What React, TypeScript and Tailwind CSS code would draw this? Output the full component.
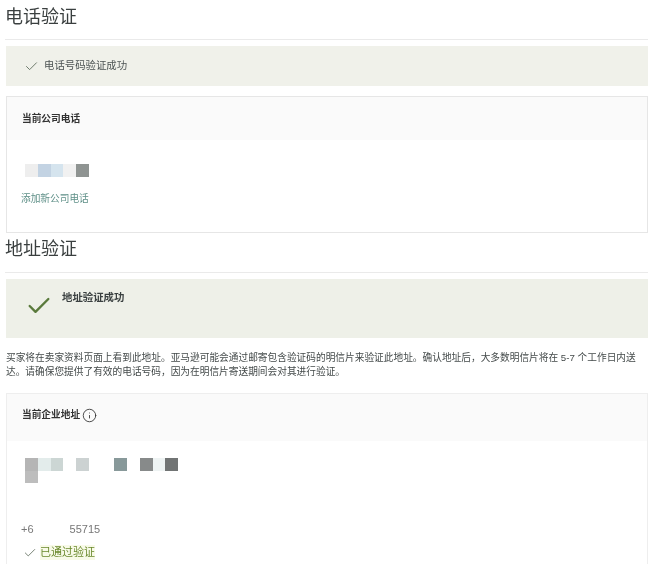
import React from 'react';
import { Check, Info } from 'lucide-react';

const phoneCells = ['#eeeeee', '#c3d3e3', '#d5e4ee', '#f1f1f1', '#8f9492'];
const addressCells = ['#b5b5b5', '#e3eceb', '#ccd6d4', 'transparent', '#ccd2d2', 'transparent', 'transparent', '#88999a', 'transparent', '#878a8a', '#eef3f3', '#717474'];

const Mosaic: React.FC<{ cells: string[] }> = ({ cells }) => (
  <div className="flex">
    {cells.map((color, i) => (
      <div key={i} className="w-[12.75px] h-[13px]" style={{ backgroundColor: color }} />
    ))}
  </div>
);

export default function App() {
  return (
    <div className="h-[564px] overflow-hidden bg-white pl-[6px] pr-[7px] font-['Liberation_Sans','Noto_Sans_CJK_SC',sans-serif] blur-[0.5px]">
      <div className="pt-[5px]">
        <div className="h-[35px] -ml-[1px] border-b border-[#eaeaea] text-[18px] leading-[24px] text-[#3a3f3f]">电话验证</div>
      </div>

      <div className="mt-[6px] h-[40px] flex items-center bg-[#f0f1ea] pl-[18px] gap-[5px]">
        <Check size={15} strokeWidth={1.4} className="text-[#5c6a5a]" />
        <span className="text-[10.4px] text-[#4d5454]">电话号码验证成功</span>
      </div>

      <div className="mt-[10px] h-[137px] border border-[#e6e6e6]">
        <div className="h-[43px] flex items-center bg-[#fafafa] pl-[15px] pt-[2px] text-[9.7px] font-bold text-[#333333]">当前公司电话</div>
        <div className="pl-[18px] pt-[24px]">
          <Mosaic cells={phoneCells} />
          <div className="mt-[15px] -ml-[4px] text-[9.7px] leading-[14px] text-[#5f9088]">添加新公司电话</div>
        </div>
      </div>

      <div className="mt-[4px]">
        <div className="h-[36px] -ml-[1px] border-b border-[#eaeaea] text-[18px] leading-[24px] text-[#3a3f3f]">地址验证</div>
      </div>

      <div className="mt-[6px] h-[59px] flex items-start bg-[#eef0e8] pl-[19px]">
        <Check size={28} strokeWidth={2} className="mt-[13px] text-[#5a7a3c]" />
        <span className="ml-[9px] mt-[12px] text-[10.4px] leading-[14px] font-bold text-[#3a4040]">地址验证成功</span>
      </div>

      <p className="mt-[13px] text-[9.7px] leading-[14px] text-[#444a4a]">
        买家将在卖家资料页面上看到此地址。亚马逊可能会通过邮寄包含验证码的明信片来验证此地址。确认地址后，大多数明信片将在 5-7 个工作日内送达。请确保您提供了有效的电话号码，因为在明信片寄送期间会对其进行验证。
      </p>

      <div className="mt-[14px] border border-[#eeeeee] border-b-0 h-[180px]">
        <div className="h-[47px] flex items-center gap-[2px] bg-[#fafafa] pl-[15px] pb-[4px] text-[9.7px] font-bold text-[#333333]">
          当前企业地址
          <Info size={15} strokeWidth={1.4} className="text-[#333333]" />
        </div>
        <div className="pl-[18px] pt-[17px]">
          <Mosaic cells={addressCells} />
          <div className="w-[12.75px] h-[12px] bg-[#bdbdbd]" />
          <div className="mt-[40px] -ml-[4px] flex text-[11px] leading-[12px] text-[#777777]">
            <span>+6</span>
            <span className="ml-[36px]">55715</span>
          </div>
          <div className="mt-[10px] -ml-[2px] flex items-center gap-[3px] text-[11px] leading-[15px] text-[#6b8a2e]">
            <Check size={14} strokeWidth={1.4} className="text-[#5c6a5a]" />
            <span className="bg-[#f8fae8]">已通过验证</span>
          </div>
        </div>
      </div>
    </div>
  );
}
